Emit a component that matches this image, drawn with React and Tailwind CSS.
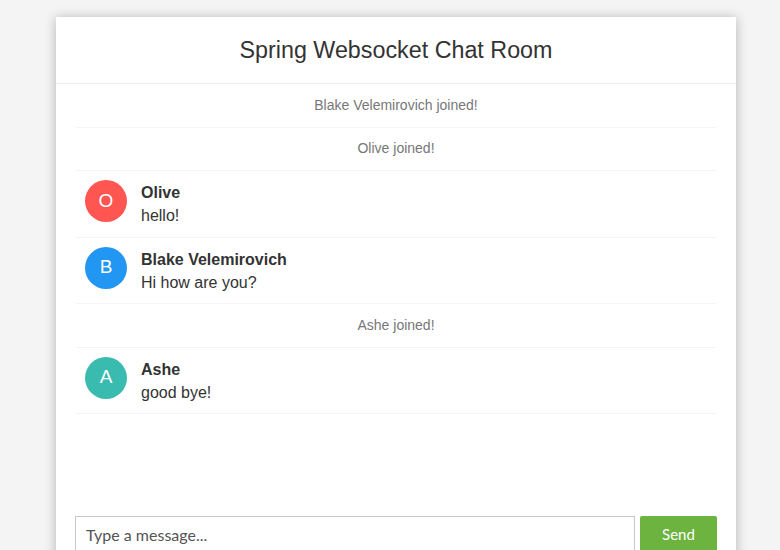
import React, { useState } from "react";

const messages = [
  { type: "JOIN", sender: "Blake Velemirovich" },
  { type: "JOIN", sender: "Olive" },
  { type: "CHAT", sender: "Olive", content: "hello!", color: "bg-[#ff5652]" },
  { type: "CHAT", sender: "Blake Velemirovich", content: "Hi how are you?", color: "bg-[#2196f3]" },
  { type: "JOIN", sender: "Ashe" },
  { type: "CHAT", sender: "Ashe", content: "good bye!", color: "bg-[#39bbb0]" },
];

const ChatRoom = () => {
  const [text, setText] = useState("");

  return (
    <div className="min-h-[550px] bg-[#f4f4f4] pt-[17px] pl-[56px] font-['Liberation_Sans',Arial,sans-serif]">
      <div className="w-[680px] h-[560px] bg-white shadow-[0_1px_11px_rgba(0,0,0,0.27)] flex flex-col">
        <div className="h-[67px] border-b border-[#ececec] flex items-center justify-center">
          <h2 className="text-[23.3px] text-[#333] font-normal">Spring Websocket Chat Room</h2>
        </div>
        <ul className="px-[20px] h-[432px]">
          {messages.map((m, i) =>
            m.type === "JOIN" ? (
              <li key={i} className="h-[43.5px] border-b border-[#f4f4f4] flex items-center justify-center text-[14px] text-[#777]">
                {m.sender} joined!
              </li>
            ) : (
              <li key={i} className="h-[66.5px] border-b border-[#f4f4f4] flex items-start pt-[9px] pl-[9px]">
                <div className={`${m.color} w-[42px] h-[42px] rounded-full flex items-center justify-center text-white text-[19px] shrink-0`}>
                  {m.sender[0]}
                </div>
                <div className="ml-[14px] mt-[1px] text-[16px] text-[#333] leading-[23px]">
                  <div className="font-bold">{m.sender}</div>
                  <div>{m.content}</div>
                </div>
              </li>
            )
          )}
        </ul>
        <form className="flex px-[19px] gap-[5px]" onSubmit={(e) => e.preventDefault()}>
          <input
            value={text}
            onChange={(e) => setText(e.target.value)}
            placeholder="Type a message..."
            className="flex-1 h-[36px] border border-[#c8c8c8] px-[10px] text-[16px] text-[#333] placeholder:text-[#555] outline-none font-['Lato',sans-serif]"
          />
          <button className="w-[77px] h-[36px] bg-[#6db33f] text-white text-[15px] rounded-[2px] font-['Lato',sans-serif]">
            Send
          </button>
        </form>
      </div>
    </div>
  );
};

export default function App() {
  return <ChatRoom />;
}
